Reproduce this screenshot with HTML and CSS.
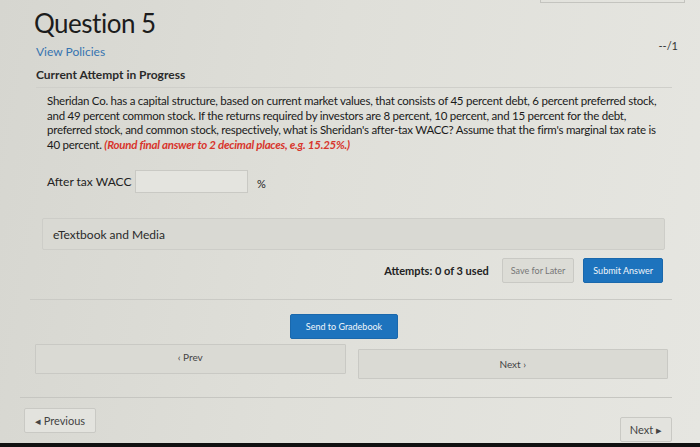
FILE: index.html
```html
<!DOCTYPE html>
<html>
<head>
   <title>Question 5</title>
   <link rel="stylesheet" href="styles.css">
</head>
<body>
<div id="page">
   <div class="topbox"></div>
   <h1>Question 5</h1>
   <div class="meta">
      <a class="policies" href="#">View Policies</a>
      <span class="score">--/1</span>
   </div>
   <div class="attempt">Current Attempt in Progress</div>

   <div id="q">
      <p class="text">Sheridan Co. has a capital structure, based on current market values, that consists of 45 percent debt, 6 percent preferred stock,<br>
      and 49 percent common stock. If the returns required by investors are 8 percent, 10 percent, and 15 percent for the debt,<br>
      preferred stock, and common stock, respectively, what is Sheridan's after-tax WACC? Assume that the firm's marginal tax rate is<br>
      40 percent. <em class="hint">(Round final answer to 2 decimal places, e.g. 15.25%.)</em></p>

      <div class="answer">
         <label for="wacc">After tax WACC</label>
         <input type="text" id="wacc" class="field">
         <span class="unit">%</span>
      </div>

      <div class="media">eTextbook and Media</div>

      <div class="actions">
         <span class="attempts">Attempts: 0 of 3 used</span>
         <button class="btn">Save for Later</button>
         <button class="btn blue">Submit Answer</button>
      </div>
   </div>

   <div class="send"><button class="btn blue">Send to Gradebook</button></div>

   <div class="pager">
      <button class="wide">&#8249; Prev</button>
      <button class="wide next">Next &#8250;</button>
   </div>

   <div class="foot">
      <button class="btn small">&#9666; Previous</button>
      <button class="btn small">Next &#9656;</button>
   </div>
</div>
<div id="edge"></div>
</body>
</html>
```

FILE: styles.css
```css
* { margin: 0; padding: 0; box-sizing: border-box; }
html, body { height: 100%; }
body {
   font-family: Lato, "Open Sans", Arial, sans-serif;
   color: #222;
   background: linear-gradient(100deg, #d6d6d0 0%, #dfdfd9 45%, #e6e6e1 100%);
   overflow: hidden;
}

#page { padding: 0 28px 0 22px; height: 443px; }

.topbox { margin-left: 518px; width: 145px; height: 3px; border: 1px solid #c4c4bf; border-top: 0; }

h1 { font-size: 26px; font-weight: 400; letter-spacing: -0.5px; color: #1c1c1c; line-height: 30px; margin: 5px 0 0 12px; }

.meta { display: flex; justify-content: space-between; align-items: flex-start; margin-left: 14px; margin-right: -6px; }
.policies { display: block; margin-top: 6px; font-size: 12px; color: #3674b0; text-decoration: none; line-height: 16px; }
.score { font-size: 11px; margin-top: 1px; color: #333; }

.attempt { margin: 7px 0 0 14px; padding-bottom: 5px; font-size: 12px; font-weight: 700; color: #2a2a2a; border-bottom: 1px solid #cfcfca; }

#q { padding: 6px 7px 0 25px; }
.text { font-size: 11.5px; line-height: 14.5px; letter-spacing: -0.25px; color: #1a1a1a; white-space: nowrap; }
.hint { font-style: italic; font-weight: 700; color: #d8352c; line-height: 14px; }

.answer { display: flex; align-items: center; margin-top: 18px; font-size: 12px; }
.answer label { width: 88px; }
.field { width: 113px; height: 23px; border: 1px solid #c9c9c4; background: #e4e4df; }
.unit { margin-left: 9px; margin-top: 4px; font-size: 11px; }

.media { margin: 25px 0 0 -5px; height: 32px; padding: 8px 10px; border: 1px solid #cdcdc8; border-radius: 2px; background: #d9d9d3; font-size: 12px; color: #2a2a2a; }

.actions { display: flex; justify-content: flex-end; align-items: center; gap: 9px; margin-top: 8px; margin-right: -7px; padding: 0 9px 16px 0; border-bottom: 1px solid #cacac5; margin-left: -17px; }
.attempts { font-size: 11px; font-weight: 700; margin-right: 4px; }

.btn { font-family: Lato, "Open Sans", Arial, sans-serif; font-size: 9px; height: 25px; padding: 0 8px; border: 1px solid #c9c9c4; border-radius: 2px; background: #dcdcd6; color: #777; }
.btn.blue { background: #1d73bd; border-color: #1a68ac; color: #f2f6fa; padding: 0 9px; }

.send { display: flex; justify-content: center; margin-top: 14px; margin-left: -6px; }
.send .btn { width: 108px; }

.pager { display: flex; gap: 12px; margin-top: 5px; padding: 0 4px 0 13px; }
.wide { flex: 1; height: 30px; border: 1px solid #c9c9c4; background: #dadad4; font-family: Lato, "Open Sans", Arial, sans-serif; font-size: 10px; color: #444; border-radius: 1px; padding-bottom: 4px; }
.wide.next { margin-top: 5px; padding-top: 4px; }

.foot { display: flex; justify-content: space-between; margin-top: 18px; margin-left: -2px; padding-top: 10px; border-top: 1px solid #c6c6c1; }
.foot .btn.small { font-size: 11px; color: #444; height: 25px; padding: 0 9px; background: #e3e3de; }
.foot .btn.small:first-child { margin-left: 4px; width: 72px; }
.foot .btn.small:last-child { margin-top: 9px; }

#edge { height: 4px; background: #111; }
```
